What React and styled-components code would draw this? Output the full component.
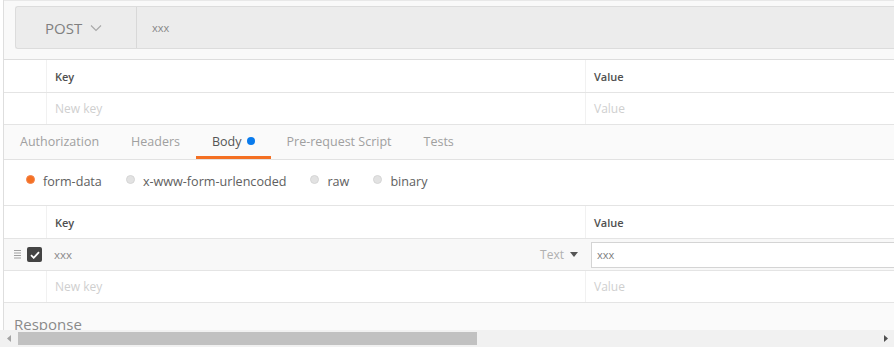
import React from "react";
import styled, { createGlobalStyle } from "styled-components";

const GlobalStyle = createGlobalStyle`
  *, *::before, *::after {
    box-sizing: border-box;
  }
  body {
    margin: 0;
    font-family: "Open Sans", "Liberation Sans", sans-serif;
    overflow: hidden;
    background: #ffffff;
  }
`;

const Frame = styled.div`
  width: 894px;
  height: 347px;
  display: flex;
  flex-direction: column;
  overflow: hidden;
`;

const Viewport = styled.div`
  flex: 1;
  min-height: 0;
  overflow: hidden;
  margin-left: 3px;
  border-left: 1px solid #dedede;
  display: flex;
  flex-direction: column;
`;

const UrlSection = styled.div`
  height: 60px;
  flex-shrink: 0;
  background: #f9f9f9;
  padding: 5px 0 0 11px;
  border-top: 1px solid #e8e8e8;
  border-bottom: 1px solid #dddddd;
`;

const UrlBar = styled.div`
  display: flex;
  height: 43px;
  background: #ececec;
  border: 1px solid #dcdcdc;
  border-right: none;
  border-radius: 3px 0 0 3px;
`;

const MethodSelect = styled.div`
  width: 121px;
  display: flex;
  align-items: center;
  gap: 8px;
  padding-left: 29px;
  border-right: 1px solid #d8d8d8;
  font-size: 15px;
  color: #808080;
`;

const UrlText = styled.div`
  display: flex;
  align-items: center;
  padding-left: 15px;
  font-size: 11px;
  color: #888;
`;

const Row = styled.div`
  display: grid;
  grid-template-columns: 42px 539px 1fr;
  flex-shrink: 0;
  height: ${(p) => p.$h || 32}px;
  border-bottom: 1px solid #e4e4e4;
  background: ${(p) => (p.$shade ? "#f8f8f8" : "#ffffff")};
`;

const Cell = styled.div`
  display: flex;
  align-items: center;
  padding-left: 8px;
  border-left: ${(p) => (p.$line ? "1px solid #f1f1f1" : "none")};
  font-size: ${(p) => (p.$head ? 11 : 12)}px;
  font-weight: ${(p) => (p.$head ? 600 : 400)};
  color: ${(p) => (p.$head ? "#505050" : p.$muted ? "#cfcfcf" : "#808080")};
  min-width: 0;
`;

const Tabs = styled.div`
  display: flex;
  flex-shrink: 0;
  height: 35px;
  background: #fafafa;
  border-bottom: 1px solid #e2e2e2;
`;

const Tab = styled.div`
  position: relative;
  display: flex;
  align-items: center;
  gap: 5px;
  padding: 0 16px 2px;
  font-size: 12.5px;
  color: ${(p) => (p.$active ? "#555" : "#a0a0a0")};

  &::after {
    content: "";
    display: ${(p) => (p.$active ? "block" : "none")};
    position: absolute;
    left: 0;
    right: 0;
    bottom: 0;
    height: 3px;
    background: #f47023;
  }
`;

const Dot = styled.span`
  width: 8px;
  height: 8px;
  border-radius: 50%;
  background: #097bed;
`;

const RadioRow = styled.div`
  display: flex;
  align-items: center;
  flex-shrink: 0;
  gap: 24px;
  height: 46px;
  padding: 0 0 2px 22px;
  border-bottom: 1px solid #e4e4e4;
`;

const RadioItem = styled.div`
  display: flex;
  align-items: center;
  gap: 8px;
  font-size: 12.6px;
  color: #606060;
`;

const RadioCircle = styled.span`
  width: 9px;
  height: 9px;
  border-radius: 50%;
  background: ${(p) => (p.$on ? "#f47023" : "#e2e2e2")};
  border: 1px solid ${(p) => (p.$on ? "#f5844a" : "#d6d6d6")};
  margin-top: -5px;
`;

const Handle = styled.div`
  display: flex;
  align-items: center;
  gap: 6px;
  padding-left: 10px;
`;

const Check = styled.span`
  width: 15px;
  height: 15px;
  border-radius: 2px;
  background: #444;
  display: flex;
  align-items: center;
  justify-content: center;
`;

const KeyCell = styled.div`
  display: flex;
  align-items: center;
  justify-content: space-between;
  padding: 0 7px 0 8px;
  font-size: 11.5px;
  color: #8a8a8a;
`;

const TypeSelect = styled.span`
  display: flex;
  align-items: center;
  gap: 6px;
  color: #b0b0b0;
  font-size: 12px;
`;

const ValueInput = styled.div`
  align-self: center;
  margin-left: 6px;
  height: 26px;
  display: flex;
  align-items: center;
  padding-left: 5px;
  background: #fff;
  border: 1px solid #d4d4d4;
  border-right: none;
  font-size: 11px;
  color: #808080;
`;

const Response = styled.div`
  flex: 1;
  background: #fafafa;
  padding: 11px 0 0 10px;
  font-size: 15px;
  color: #8a8a8a;
  line-height: 20px;
`;

const Scrollbar = styled.div`
  height: 17px;
  flex-shrink: 0;
  display: flex;
  align-items: center;
  background: #f1f1f1;
`;

const ArrowButton = styled.div`
  width: 17px;
  height: 17px;
  display: flex;
  align-items: center;
  justify-content: center;
`;

const Track = styled.div`
  flex: 1;
  height: 100%;
  display: flex;
  align-items: center;
  padding-left: 1px;
`;

const Thumb = styled.div`
  height: 13px;
  background: #c1c1c1;
`;

const Chevron = () => (
  <svg width="12" height="8" viewBox="0 0 12 8">
    <path d="M1 1.5 L6 6.5 L11 1.5" fill="none" stroke="#a8a8a8" strokeWidth="1.1" />
  </svg>
);

const GripIcon = () => (
  <svg width="7" height="9" viewBox="0 0 7 9">
    {[0.5, 3, 5.5, 8].map((y) => (
      <rect key={y} x="0" y={y - 0.5} width="7" height="1" fill="#a0a0a0" />
    ))}
  </svg>
);

const Tick = () => (
  <svg width="10" height="8" viewBox="0 0 10 8">
    <path d="M1 4.2 L3.7 6.8 L9 1.2" fill="none" stroke="#fff" strokeWidth="1.8" />
  </svg>
);

const Caret = () => (
  <svg width="8" height="5" viewBox="0 0 8 5">
    <path d="M0 0 H8 L4 5 Z" fill="#555" />
  </svg>
);

const Arrow = ({ dir, color }) => (
  <svg width="4" height="7" viewBox="0 0 4 7">
    <path d={dir === "left" ? "M4 0 V7 L0 3.5 Z" : "M0 0 V7 L4 3.5 Z"} fill={color} />
  </svg>
);

const tabs = ["Authorization", "Headers", "Body", "Pre-request Script", "Tests"];
const bodyTypes = ["form-data", "x-www-form-urlencoded", "raw", "binary"];

export default function App() {
  return (
    <Frame>
      <GlobalStyle />
      <Viewport>
        <UrlSection>
          <UrlBar>
            <MethodSelect>
              POST <Chevron />
            </MethodSelect>
            <UrlText>xxx</UrlText>
          </UrlBar>
        </UrlSection>

        <Row $h={33}>
          <Cell />
          <Cell $line $head>Key</Cell>
          <Cell $line $head>Value</Cell>
        </Row>
        <Row $h={32}>
          <Cell />
          <Cell $line $muted>New key</Cell>
          <Cell $line $muted>Value</Cell>
        </Row>

        <Tabs>
          {tabs.map((t) => (
            <Tab key={t} $active={t === "Body"}>
              {t}
              {t === "Body" && <Dot />}
            </Tab>
          ))}
        </Tabs>

        <RadioRow>
          {bodyTypes.map((b) => (
            <RadioItem key={b}>
              <RadioCircle $on={b === "form-data"} />
              {b}
            </RadioItem>
          ))}
        </RadioRow>

        <Row $h={33}>
          <Cell />
          <Cell $line $head>Key</Cell>
          <Cell $line $head>Value</Cell>
        </Row>
        <Row $h={32} $shade>
          <Handle>
            <GripIcon />
            <Check>
              <Tick />
            </Check>
          </Handle>
          <KeyCell>
            xxx
            <TypeSelect>
              Text <Caret />
            </TypeSelect>
          </KeyCell>
          <ValueInput>xxx</ValueInput>
        </Row>
        <Row $h={32}>
          <Cell />
          <Cell $line $muted>New key</Cell>
          <Cell $line $muted>Value</Cell>
        </Row>

        <Response>Response</Response>
      </Viewport>

      <Scrollbar>
        <ArrowButton>
          <Arrow dir="left" color="#a3a3a3" />
        </ArrowButton>
        <Track>
          <Thumb style={{ width: 459 }} />
        </Track>
        <ArrowButton>
          <Arrow dir="right" color="#505050" />
        </ArrowButton>
      </Scrollbar>
    </Frame>
  );
}
